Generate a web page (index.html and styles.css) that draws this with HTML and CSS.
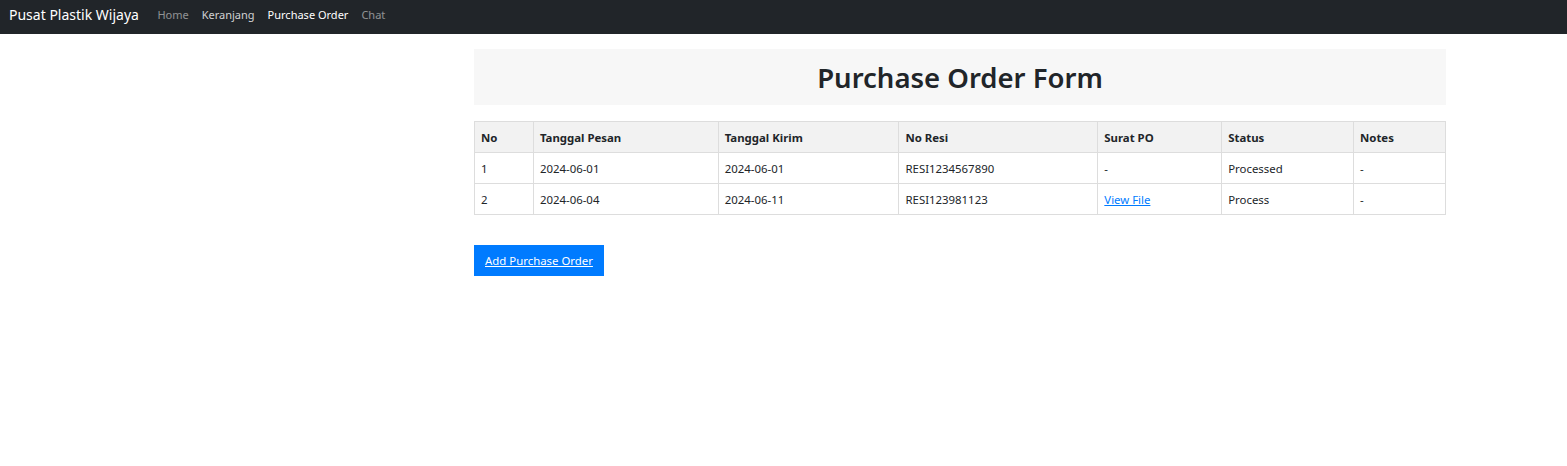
FILE: index.html
```html
<!DOCTYPE html>
<html lang="id">
<head>
<meta charset="utf-8">
<title>Purchase Order</title>
<link rel="stylesheet" href="styles.css">
</head>
<body>
<nav class="navbar">
  <a class="brand" href="#">Pusat Plastik Wijaya</a>
  <ul class="nav-links">
    <li><a class="nav-link" href="#">Home</a></li>
    <li><a class="nav-link light" href="#">Keranjang</a></li>
    <li><a class="nav-link active" href="#">Purchase Order</a></li>
    <li><a class="nav-link" href="#">Chat</a></li>
  </ul>
</nav>
<main class="main">
  <header class="title-box">
    <h1 class="title">Purchase Order Form</h1>
  </header>
  <table class="po-table">
    <colgroup>
      <col class="c1"><col class="c2"><col class="c3"><col class="c4"><col class="c5"><col class="c6"><col class="c7">
    </colgroup>
    <thead>
      <tr><th>No</th><th>Tanggal Pesan</th><th>Tanggal Kirim</th><th>No Resi</th><th>Surat PO</th><th>Status</th><th>Notes</th></tr>
    </thead>
    <tbody>
      <tr><td>1</td><td>2024-06-01</td><td>2024-06-01</td><td>RESI1234567890</td><td>-</td><td>Processed</td><td>-</td></tr>
      <tr><td>2</td><td>2024-06-04</td><td>2024-06-11</td><td>RESI123981123</td><td><a class="file-link" href="#">View File</a></td><td>Process</td><td>-</td></tr>
    </tbody>
  </table>
  <a class="btn-add" href="#">Add Purchase Order</a>
</main>
</body>
</html>
```
FILE: styles.css
```css
* { box-sizing: border-box; }
body {
  margin: 0;
  font-family: "Noto Sans", "Open Sans", sans-serif;
  color: #212529;
  background: #fff;
}
.navbar {
  display: flex;
  align-items: center;
  height: 34px;
  background: #212529;
  padding: 0 9px 6px;
}
.brand {
  color: #fff;
  text-decoration: none;
  font-size: 14px;
  margin-right: 12px;
}
.nav-links {
  display: flex;
  list-style: none;
  margin: 0;
  padding: 0;
}
.nav-link {
  display: block;
  padding: 0 6.5px;
  font-size: 11px;
  color: rgba(255,255,255,0.5);
  text-decoration: none;
}
.nav-link.light { color: rgba(255,255,255,0.8); }
.nav-link.active { color: #fff; }
.main {
  margin: 15px 121px 0 474px;
}
.title-box {
  background: #f7f7f7;
  height: 56px;
  display: flex;
  align-items: center;
  justify-content: center;
}
.title {
  margin: 0;
  font-size: 27.5px;
  font-weight: 600;
  color: #212529;
}
.po-table {
  width: 100%;
  margin-top: 16px;
  border-collapse: collapse;
  font-size: 11.4px;
}
.c1 { width: 59px; }
.c2 { width: 185px; }
.c3 { width: 181px; }
.c4 { width: 199px; }
.c5 { width: 124px; }
.c6 { width: 132px; }
.c7 { width: 92px; }
.po-table th, .po-table td {
  border: 1px solid #ddd;
  text-align: left;
  padding: 0 6px;
  height: 31px;
  vertical-align: middle;
}
.po-table th {
  background: #f2f2f2;
  font-weight: 700;
}
.file-link { color: #007bff; }
.btn-add {
  display: inline-block;
  margin-top: 30px;
  background: #007bff;
  color: #fff;
  font-size: 11.4px;
  padding: 0 11px;
  line-height: 31px;
}
```
